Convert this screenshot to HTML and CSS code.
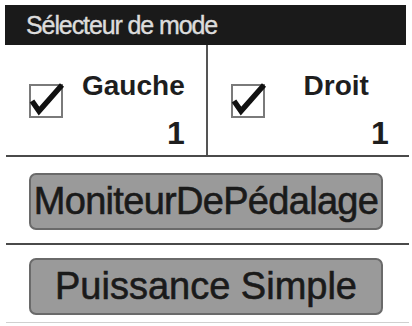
FILE: index.html
```html
<!DOCTYPE html>
<html lang="fr">
<head>
<meta charset="utf-8">
<title>Sélecteur de mode</title>
<link rel="stylesheet" href="styles.css">
</head>
<body>
<div class="panel">
  <div class="header">Sélecteur de mode</div>
  <div class="sides">
    <div class="side">
      <svg class="check" width="36" height="36" viewBox="0 0 36 36">
        <rect x="1" y="1" width="32" height="32" fill="#fff" stroke="#7a7a7a" stroke-width="2"/>
        <polyline points="3,17 10,27 33,1" fill="none" stroke="#111" stroke-width="5.5" stroke-linejoin="miter"/>
      </svg>
      <div class="info">
        <div class="label">Gauche</div>
        <div class="num">1</div>
      </div>
    </div>
    <div class="side side-right">
      <svg class="check" width="36" height="36" viewBox="0 0 36 36">
        <rect x="1" y="1" width="32" height="32" fill="#fff" stroke="#7a7a7a" stroke-width="2"/>
        <polyline points="3,17 10,27 33,1" fill="none" stroke="#111" stroke-width="5.5" stroke-linejoin="miter"/>
      </svg>
      <div class="info">
        <div class="label">Droit</div>
        <div class="num">1</div>
      </div>
    </div>
  </div>
  <div class="section">
    <div class="btn btn-tight">MoniteurDePédalage</div>
  </div>
  <div class="section section-last">
    <div class="btn">Puissance Simple</div>
  </div>
</div>
</body>
</html>
```
FILE: styles.css
```css
html, body {
  margin: 0;
  padding: 0;
  background: #fff;
}
body {
  font-family: "Liberation Sans", Arial, sans-serif;
  color: #1c1c1c;
}
.panel {
  padding: 5px 3px 0 5px;
  width: 404px;
}
.header {
  height: 40px;
  background: #1a1a1a;
  color: #dcdcdc;
  font-size: 25px;
  letter-spacing: -1.1px;
  -webkit-text-stroke: 0.4px #dcdcdc;
  display: flex;
  align-items: center;
  padding-left: 21px;
  padding-top: 1px;
  box-sizing: border-box;
  width: 401px;
}
.sides {
  display: flex;
  height: 110px;
  border-bottom: 2px solid #4a4a4a;
  margin-left: 1px;
}
.side {
  flex: 0 0 201px;
  display: flex;
  align-items: flex-start;
  box-sizing: border-box;
  padding-left: 23px;
  padding-right: 21px;
  border-right: 2px solid #555;
}
.side-right {
  flex: 0 0 202px;
  border-right: none;
}
.check {
  margin-top: 39px;
  flex: 0 0 36px;
  overflow: visible;
}
.info {
  flex: 1;
  margin-left: 17px;
  padding-top: 25px;
  display: flex;
  flex-direction: column;
}
.label {
  font-size: 28px;
  font-weight: bold;
  line-height: 32px;
  text-align: center;
  color: #1e1e1e;
}
.num {
  font-size: 32px;
  font-weight: bold;
  line-height: 34px;
  margin-top: 14px;
  text-align: right;
  color: #1e1e1e;
}
.section {
  padding: 16px 0 13px 23px;
  border-bottom: 2px solid #4a4a4a;
  margin-left: 1px;
}
.section-last {
  padding-top: 13px;
  padding-bottom: 7px;
  border-bottom: 1px solid #d0d0d0;
}
.btn {
  width: 354px;
  height: 57px;
  box-sizing: border-box;
  background: #9a9a9a;
  border: 2px solid #6a6a6a;
  border-radius: 7px;
  display: flex;
  align-items: center;
  justify-content: center;
  font-size: 38px;
  white-space: nowrap;
  color: #1a1a1a;
  -webkit-text-stroke: 0.6px #1a1a1a;
}
.btn-tight {
  letter-spacing: -0.7px;
}
```
